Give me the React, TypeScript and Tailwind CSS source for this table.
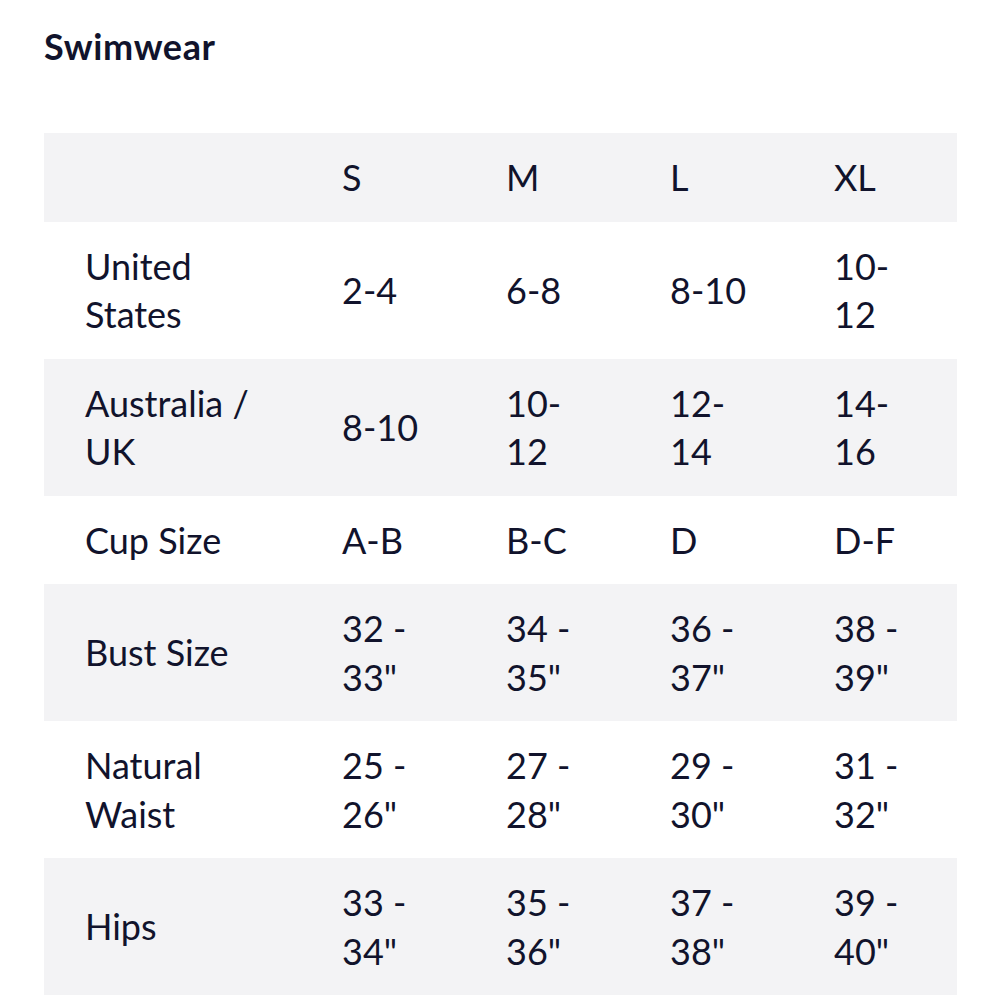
import React from 'react';

const sizes = ['S', 'M', 'L', 'XL'];

const rows: { label: string; values: string[] }[] = [
  { label: 'United States', values: ['2-4', '6-8', '8-10', '10-12'] },
  { label: 'Australia / UK', values: ['8-10', '10-12', '12-14', '14-16'] },
  { label: 'Cup Size', values: ['A-B', 'B-C', 'D', 'D-F'] },
  { label: 'Bust Size', values: ['32 - 33"', '34 - 35"', '36 - 37"', '38 - 39"'] },
  { label: 'Natural Waist', values: ['25 - 26"', '27 - 28"', '29 - 30"', '31 - 32"'] },
  { label: 'Hips', values: ['33 - 34"', '35 - 36"', '37 - 38"', '39 - 40"'] },
];

const App: React.FC = () => {
  return (
    <div
      className="min-h-screen bg-white text-[#11132c] px-[44px] pt-[25px]"
      style={{ fontFamily: 'Lato, "Open Sans", sans-serif' }}
    >
      <h2 className="text-[36px] font-bold leading-[42px] tracking-[0.6px]">Swimwear</h2>

      <table className="mt-[66px] w-[913px] table-fixed border-collapse text-[36px] leading-[48.5px]">
        <colgroup>
          <col className="w-[258px]" />
          <col className="w-[164px]" />
          <col className="w-[164px]" />
          <col className="w-[164px]" />
          <col className="w-[163px]" />
        </colgroup>
        <thead>
          <tr className="bg-[#f3f3f5]">
            <th className="pl-[41px] pr-[40px] py-[20px]" />
            {sizes.map((s) => (
              <th key={s} className="pl-[40px] pr-[40px] py-[20px] text-left font-normal">
                {s}
              </th>
            ))}
          </tr>
        </thead>
        <tbody>
          {rows.map((row, i) => (
            <tr key={row.label} className={i % 2 === 1 ? 'bg-[#f3f3f5]' : 'bg-white'}>
              <td className="pl-[41px] pr-[40px] py-[20px] align-middle">{row.label}</td>
              {row.values.map((v, j) => (
                <td key={j} className="pl-[40px] pr-[40px] py-[20px] align-middle">
                  {v}
                </td>
              ))}
            </tr>
          ))}
        </tbody>
      </table>
    </div>
  );
};

export default App;
